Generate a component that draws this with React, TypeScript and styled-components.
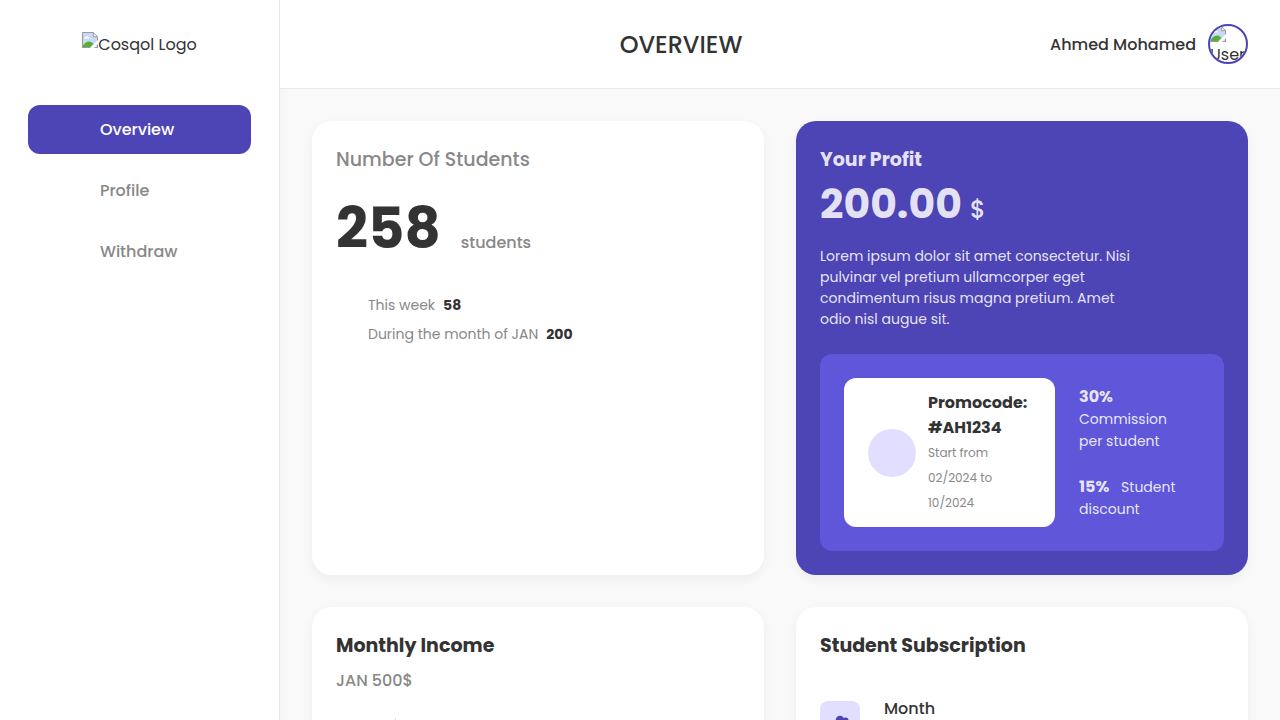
import React from 'react';
import styled, { createGlobalStyle } from 'styled-components';

const color = {
  primary: '#4d44b5',
  primaryLight: '#6056d9',
  lilac: '#e1deff',
  text: '#333333',
  muted: '#888888',
  page: '#f9f9f9',
  line: '#e8e8e8',
  onPrimary: 'rgba(255, 255, 255, 0.87)',
};

const GlobalStyle = createGlobalStyle`
  *, *::before, *::after { box-sizing: border-box; }
  body {
    margin: 0;
    background: ${color.page};
    color: ${color.text};
    font: 400 16px/25px Poppins, Inter, sans-serif;
  }
  h1, h2, p, ul, dl, dd { margin: 0; padding: 0; }
  ul { list-style: none; }
`;

const Layout = styled.div`
  display: grid;
  grid-template-columns: 280px minmax(0, 1fr);
  min-height: 100vh;
`;

const Sidebar = styled.aside`
  display: flex;
  flex-direction: column;
  align-items: center;
  gap: 48px;
  padding: 32px 0;
  background: #fff;
  border-right: 1px solid ${color.line};
  box-shadow: 4px 0 12px rgba(0, 0, 0, 0.02);
`;

const Logo = styled.a`
  display: flex;
  color: inherit;
  text-decoration: none;
`;

const Nav = styled.nav`
  display: flex;
  flex-direction: column;
  gap: 12px;
  width: 80%;
`;

const NavLink = styled.a<{ $active?: boolean }>`
  padding: 12px 12px 12px 72px;
  border-radius: 12px;
  background: ${(p) => (p.$active ? color.primary : 'transparent')};
  color: ${(p) => (p.$active ? '#fff' : color.muted)};
  font-weight: 500;
  text-decoration: none;
`;

const Header = styled.header`
  display: flex;
  align-items: center;
  padding: 24px 32px;
  background: #fff;
  border-bottom: 1px solid ${color.line};
`;

const PageTitle = styled.h1`
  flex: 1;
  font-size: 24px;
  font-weight: 500;
  line-height: 39px;
  text-align: center;
`;

const User = styled.div`
  display: flex;
  align-items: center;
  gap: 12px;
  font-weight: 500;
`;

const Avatar = styled.div`
  display: flex;
  flex-direction: column;
  width: 40px;
  height: 40px;
  overflow: hidden;
  border: 2px solid ${color.primary};
  border-radius: 50%;
  font-weight: 400;
  svg { flex: none; }
`;

const Grid = styled.div`
  display: grid;
  grid-template-columns: repeat(2, minmax(0, 1fr));
  gap: 32px;
  padding: 32px;
`;

const Card = styled.section<{ $primary?: boolean }>`
  padding: 24px;
  border-radius: 20px;
  background: ${(p) => (p.$primary ? color.primary : '#fff')};
  color: ${(p) => (p.$primary ? color.onPrimary : color.text)};
  box-shadow: 0 4px 12px rgba(0, 0, 0, 0.05);
`;

const CardTitle = styled.h2<{ $muted?: boolean }>`
  color: ${(p) => (p.$muted ? color.muted : 'inherit')};
  font-size: 19px;
  font-weight: ${(p) => (p.$muted ? 500 : 700)};
  line-height: 29px;
`;

const Total = styled.p`
  display: flex;
  align-items: baseline;
  gap: 20px;
  margin-top: 12px;
  color: ${color.muted};
  font-weight: 500;
`;

const TotalValue = styled.strong`
  color: ${color.text};
  font-size: 56px;
  font-weight: 700;
  line-height: 85px;
`;

const Stats = styled.dl`
  display: flex;
  flex-direction: column;
  gap: 8px;
  margin-top: 24px;
  padding-left: 32px;
  font-size: 14px;
  line-height: 21px;
`;

const Stat = styled.div`
  display: flex;
  gap: 8px;
  dt { color: ${color.muted}; }
  dd { font-weight: 700; }
`;

const Amount = styled.p`
  display: flex;
  align-items: baseline;
  gap: 8px;
  font-size: 24px;
  font-weight: 500;
`;

const AmountValue = styled.strong`
  font-size: 41px;
  font-weight: 700;
  line-height: 60px;
`;

const Description = styled.p`
  max-width: 80%;
  margin: 12px 0 24px;
  font-size: 14px;
  line-height: 21px;
`;

const Promo = styled.div`
  display: flex;
  gap: 24px;
  padding: 24px;
  border-radius: 12px;
  background: ${color.primaryLight};
`;

const PromoCard = styled.div`
  display: flex;
  align-items: center;
  gap: 12px;
  padding: 12px 24px;
  border-radius: 12px;
  background: #fff;
  color: ${color.text};
`;

const PromoDot = styled.span`
  flex: none;
  width: 48px;
  height: 48px;
  border-radius: 50%;
  background: ${color.lilac};
`;

const PromoText = styled.div`
  width: min-content;
  min-width: 103px;
  font-weight: 700;
  small {
    display: block;
    color: ${color.muted};
    font-size: 12px;
    font-weight: 400;
  }
`;

const Terms = styled.div`
  display: flex;
  flex: 1;
  flex-direction: column;
  justify-content: center;
  gap: 24px;
  min-width: 0;
  padding-right: 12px;
`;

const Term = styled.p`
  font-size: 14px;
  line-height: 22px;
  strong {
    margin-right: 8px;
    font-size: 16px;
    font-weight: 700;
  }
`;

const Income = styled.p`
  margin: 8px 0 24px;
  color: ${color.muted};
  font-weight: 500;
`;

const Chart = styled.svg`
  display: block;
  width: 100%;
  height: 240px;
`;

const Plans = styled.ul`
  margin-top: 36px;
`;

const Plan = styled.li`
  display: flex;
  align-items: center;
  gap: 24px;
  font-weight: 500;
`;

const PlanIcon = styled.span`
  display: grid;
  place-items: center;
  width: 40px;
  height: 40px;
  border-radius: 8px;
  background: ${color.lilac};
  color: ${color.primary};
`;

const PlanName = styled.span`
  min-height: 50px;
`;

function MissingImage() {
  return (
    <svg width="16" height="16" viewBox="0 0 16 16" aria-hidden="true">
      <path d="M.5.5h10.8l4.2 4.2v10.8H.5z" fill="#c6d9f7" />
      <path d="M11.3.5v4.2h4.2z" fill="#fff" />
      <path d="M2 6.5c0-1 .8-1.4 1.5-1.3C3.8 4 5.8 3.8 6.3 5.1 7.3 5 7.8 5.8 7.6 6.5z" fill="#fff" />
      <path d="M1 15v-1.8C3.2 11 5 9.6 7 9.6s3.2 1 4.5 2.4L8.5 15z" fill="#5aae35" />
      <path d="M.5 16V.5h10.8l4.2 4.2V16M11.3.5v4.2h4.2M.5 15.5h15" fill="none" stroke="#9b9b9b" />
      <path d="M8 16 16 8v4l-4 4z" fill="#fff" />
    </svg>
  );
}

function GroupIcon() {
  return (
    <svg width="24" height="24" viewBox="0 0 24 24" fill="currentColor" aria-hidden="true">
      <circle cx="12" cy="11" r="4.3" />
      <circle cx="17.5" cy="11.5" r="3" />
      <path d="M4 22c0-4 3.5-6 8-6s8 2 8 6z" />
    </svg>
  );
}

export default function App() {
  return (
    <>
      <GlobalStyle />
      <Layout>
        <Sidebar>
          <Logo href="#">
            <MissingImage />
            Cosqol Logo
          </Logo>
          <Nav>
            <NavLink href="#overview" $active aria-current="page">Overview</NavLink>
            <NavLink href="#profile">Profile</NavLink>
            <NavLink href="#withdraw">Withdraw</NavLink>
          </Nav>
        </Sidebar>
        <div>
          <Header>
            <PageTitle>OVERVIEW</PageTitle>
            <User>
              Ahmed Mohamed
              <Avatar>
                <MissingImage />
                User
              </Avatar>
            </User>
          </Header>
          <Grid as="main">
            <Card>
              <CardTitle $muted>Number Of Students</CardTitle>
              <Total>
                <TotalValue>258</TotalValue>
                students
              </Total>
              <Stats>
                <Stat><dt>This week</dt><dd>58</dd></Stat>
                <Stat><dt>During the month of JAN</dt><dd>200</dd></Stat>
              </Stats>
            </Card>
            <Card $primary>
              <CardTitle>Your Profit</CardTitle>
              <Amount>
                <AmountValue>200.00</AmountValue>
                $
              </Amount>
              <Description>
                Lorem ipsum dolor sit amet consectetur. Nisi pulvinar vel pretium
                ullamcorper eget condimentum risus magna pretium. Amet odio nisl
                augue sit.
              </Description>
              <Promo>
                <PromoCard>
                  <PromoDot />
                  <PromoText>
                    Promocode: #AH1234
                    <small>Start from 02/2024 to 10/2024</small>
                  </PromoText>
                </PromoCard>
                <Terms>
                  <Term><strong>30%</strong> Commission per student</Term>
                  <Term><strong>15%</strong> Student discount</Term>
                </Terms>
              </Promo>
            </Card>
            <Card>
              <CardTitle>Monthly Income</CardTitle>
              <Income>JAN 500$</Income>
              <Chart aria-hidden="true">
                <line x1="59.5" y1="1" x2="59.5" y2="210" stroke="#dddddd" />
              </Chart>
            </Card>
            <Card>
              <CardTitle>Student Subscription</CardTitle>
              <Plans>
                <Plan>
                  <PlanIcon><GroupIcon /></PlanIcon>
                  <PlanName>Month</PlanName>
                </Plan>
              </Plans>
            </Card>
          </Grid>
        </div>
      </Layout>
    </>
  );
}
